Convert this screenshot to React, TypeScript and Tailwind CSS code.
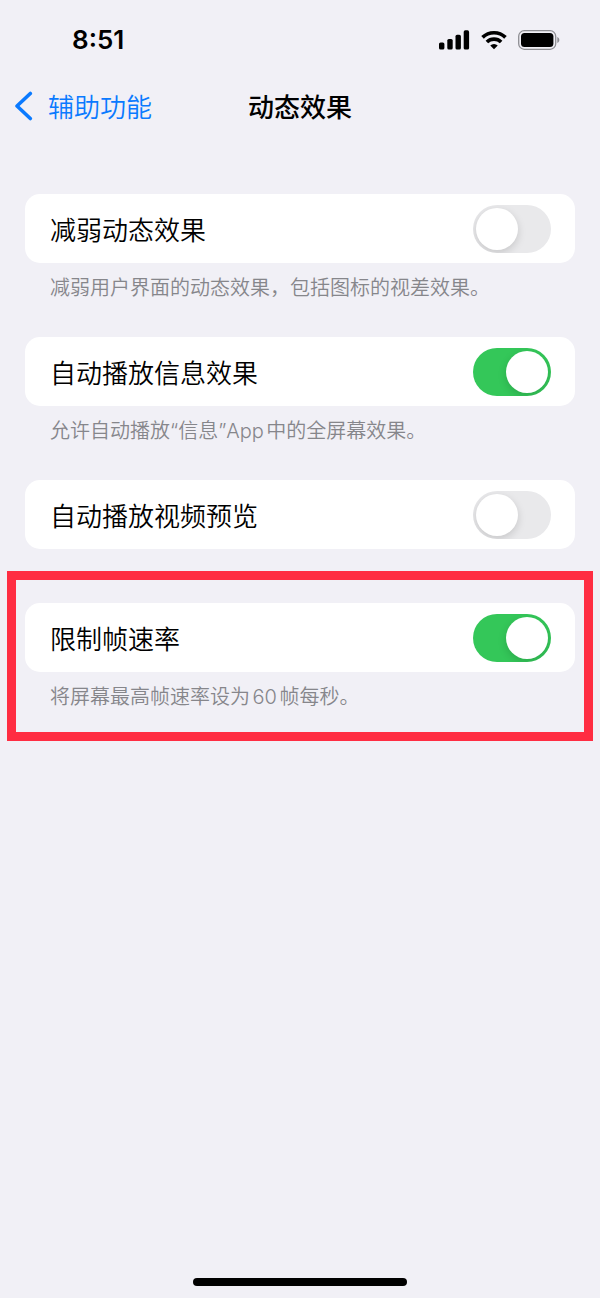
import { useState } from "react";

interface Setting {
  id: string;
  label: string;
  note?: string;
  enabled: boolean;
  highlighted?: boolean;
}

const SETTINGS: Setting[] = [
  {
    id: "reduce-motion",
    label: "减弱动态效果",
    note: "减弱用户界面的动态效果，包括图标的视差效果。",
    enabled: false,
  },
  {
    id: "message-effects",
    label: "自动播放信息效果",
    note: "允许自动播放“信息”App中的全屏幕效果。",
    enabled: true,
  },
  { id: "video-previews", label: "自动播放视频预览", enabled: false },
  {
    id: "limit-frame-rate",
    label: "限制帧速率",
    note: "将屏幕最高帧速率设为60帧每秒。",
    enabled: true,
    highlighted: true,
  },
];

function StatusBar() {
  return (
    <div className="flex h-20 items-center justify-between pr-10 pl-[72px]">
      <span className="text-[26px] leading-8 font-semibold">8:51</span>
      <div className="flex items-center gap-[11px]">
        <svg width="31" height="20" viewBox="0 0 31 20" aria-hidden="true">
          <rect x="0" y="12.5" width="5.4" height="7" rx="1.6" />
          <rect x="8.3" y="9" width="5.4" height="10.5" rx="1.6" />
          <rect x="16.5" y="4.8" width="5.4" height="14.7" rx="1.6" />
          <rect x="24.7" y="0.3" width="5.4" height="19.2" rx="1.6" />
        </svg>
        <svg
          width="26"
          height="20"
          viewBox="0 0 27 20"
          fill="none"
          stroke="black"
          strokeWidth="3.8"
          aria-hidden="true"
        >
          <path d="M1.6 7.300a17 17 0 0 1 23.8 0" />
          <path d="M6.100 12.100a10.600 10.600 0 0 1 14.800 0" />
          <path
            d="M13.5 19.6 9.600 15.700a5.600 5.600 0 0 1 7.800 0Z"
            fill="black"
            stroke="none"
          />
        </svg>
        <svg width="42" height="20" viewBox="0 0 42 20" aria-hidden="true">
          <rect
            x="0.7"
            y="0.7"
            width="37"
            height="18.6"
            rx="5.6"
            fill="none"
            stroke="#8e8e93"
            strokeWidth="1.3"
          />
          <rect x="3" y="3" width="32.4" height="14" rx="3.5" />
          <path d="M39.3 7v6c1.3-.5 2-1.600 2-3s-.7-2.500-2-3Z" fill="#8e8e93" />
        </svg>
      </div>
    </div>
  );
}

function NavBar() {
  return (
    <header className="grid h-[52px] grid-cols-[1fr_auto_1fr] items-center px-[14px]">
      <a
        href="#accessibility"
        className="flex items-center gap-[15px] text-[26px] leading-8 font-[350] text-[#0a7aff]"
      >
        <svg
          width="19"
          height="30"
          viewBox="0 0 19 30"
          fill="none"
          stroke="currentColor"
          strokeWidth="3.6"
          strokeLinecap="round"
          strokeLinejoin="round"
          aria-hidden="true"
        >
          <path d="M16.300 2.500 3 15l13.300 12.500" />
        </svg>
        <span className="pt-1">辅助功能</span>
      </a>
      <h1 className="pt-1 text-[26px] leading-8 font-medium">动态效果</h1>
    </header>
  );
}

function SettingRow({ setting }: { setting: Setting }) {
  const [on, setOn] = useState(setting.enabled);

  return (
    <>
      <div className="flex h-[69px] items-center justify-between rounded-[15px] bg-white pr-6 pl-[25px]">
        <label
          htmlFor={setting.id}
          className="pt-1 text-[26px] leading-8 font-[350]"
        >
          {setting.label}
        </label>
        <input
          id={setting.id}
          type="checkbox"
          role="switch"
          checked={on}
          onChange={(e) => setOn(e.target.checked)}
          className="flex h-12 w-[78px] shrink-0 cursor-pointer appearance-none items-center overflow-hidden rounded-full bg-[#e9e9eb] px-[3px] before:size-[42px] before:rounded-full before:bg-white before:shadow-[0_3px_8px_rgba(0,0,0,0.15)] checked:justify-end checked:bg-[#34c759]"
        />
      </div>
      {setting.note && (
        <p className="px-[25px] pt-[11px] text-[20px] leading-7 font-[350] text-[#86868b] [text-autospace:normal]">
          {setting.note}
        </p>
      )}
    </>
  );
}

export default function App() {
  return (
    <div className="flex min-h-screen flex-col bg-[#f1f0f6] font-[Inter,'Noto_Sans_CJK_SC',sans-serif] text-black">
      <StatusBar />
      <NavBar />
      <main className="flex flex-col pt-[62px]">
        {SETTINGS.map((setting) =>
          setting.highlighted ? (
            <section
              key={setting.id}
              className="-mt-8 mx-[7px] border-[9px] border-[#ff2d42] px-[9px] pt-[23px] pb-[21px]"
            >
              <SettingRow setting={setting} />
            </section>
          ) : (
            <section
              key={setting.id}
              className={
                setting.note ? "px-[25px] pb-[35px]" : "px-[25px] pb-[54px]"
              }
            >
              <SettingRow setting={setting} />
            </section>
          ),
        )}
      </main>
      <div className="mt-auto mb-3 h-2 w-[214px] self-center rounded-full bg-black" />
    </div>
  );
}
